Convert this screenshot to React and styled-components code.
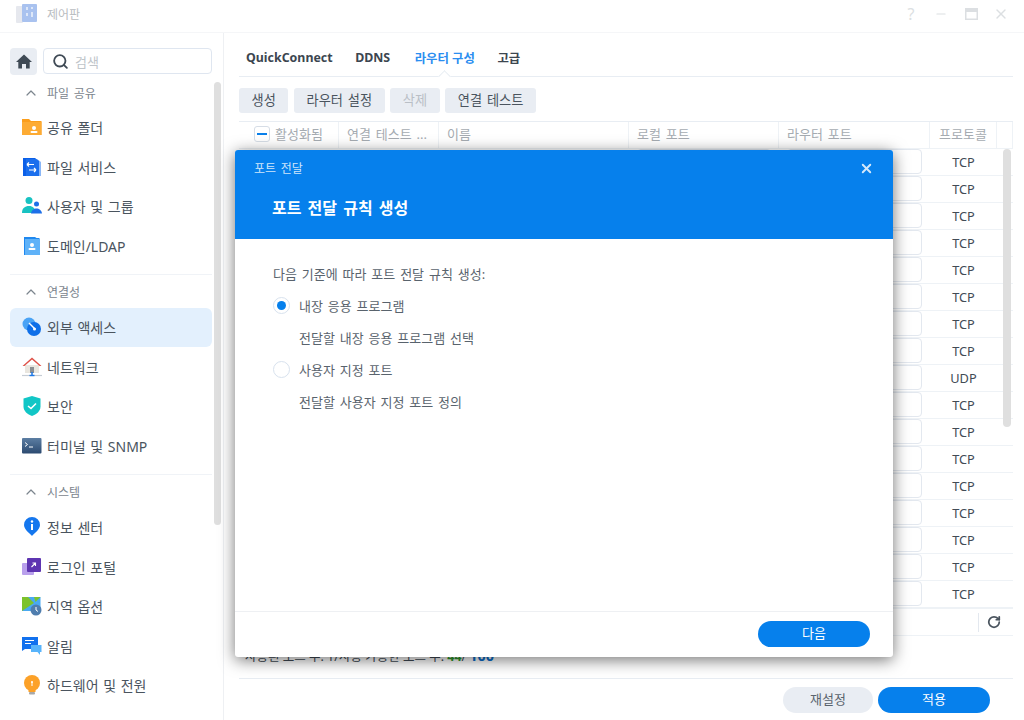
import React from "react";
import styled, { createGlobalStyle } from "styled-components";
import { ChevronUp, RotateCw, Search, X, Minus } from "lucide-react";

const Global = createGlobalStyle`
  html, body { margin: 0; padding: 0; height: 100%; overflow: hidden; background: #fff; }
  * { box-sizing: border-box; }
  body { font-family: "Noto Sans", "Noto Sans CJK KR", sans-serif; color: #414b55; word-spacing: 1.5px; }
`;

const Page = styled.div`
  position: relative;
  width: 1024px;
  height: 720px;
  overflow: hidden;
  display: flex;
  flex-direction: column;
  background: #fff;
`;
const TitleBar = styled.header`
  height: 33px;
  flex: none;
  display: flex;
  align-items: center;
  padding: 0 16px 5px;
  border-bottom: 1px solid #f5f6f8;
`;
const AppTitle = styled.span`
  margin-left: 9px;
  font-size: 12px;
  color: #b9bdc1;
  flex: 1;
`;
const WindowControls = styled.div`
  display: flex;
  align-items: center;
  gap: 14px;
  margin-right: -1px;
  color: #dcdfe2;
`;
const WindowButton = styled.span`
  width: 16px;
  height: 16px;
  display: flex;
  align-items: center;
  justify-content: center;
  font-size: 16px;
`;
const Body = styled.div`
  flex: 1;
  min-height: 0;
  display: flex;
`;
const Sidebar = styled.aside`
  position: relative;
  width: 224px;
  flex: none;
  border-right: 1px solid #eef0f3;
  padding: 15px 11px 0 10px;
  overflow: hidden;
`;
const SearchRow = styled.div`
  display: flex;
  gap: 6px;
`;
const HomeButton = styled.div`
  width: 27px;
  height: 27px;
  border-radius: 4px;
  background: #e9edf3;
  display: flex;
  align-items: center;
  justify-content: center;
`;
const SearchBox = styled.div`
  flex: 1;
  height: 26px;
  border: 1px solid #dfe6f0;
  border-radius: 4px;
  display: flex;
  align-items: center;
  gap: 6px;
  padding-left: 8px;
  font-size: 13px;
  color: #c0c5ca;
`;
const SectionHeader = styled.div`
  height: 33px;
  display: flex;
  align-items: center;
  gap: 8px;
  padding: 2px 0 0 13px;
  font-size: 12px;
  color: #7c858e;
`;
const NavItem = styled.div`
  height: 39.6px;
  display: flex;
  align-items: center;
  gap: 4px;
  padding: 0 0 1px 11px;
  border-radius: 6px;
  font-size: 14px;
  word-spacing: 1px;
  color: #4a545e;
  background: ${p => (p.$active ? "#e3f0fd" : "transparent")};
`;
const Divider = styled.div`
  height: 1px;
  margin-top: 7.5px;
  background: #f0f3f7;
`;
const SideScroll = styled.div`
  position: absolute;
  left: 214px;
  top: 49px;
  width: 7px;
  height: 443px;
  border-radius: 4px;
  background: #dfdfdf;
`;
const Main = styled.main`
  flex: 1;
  min-width: 0;
  display: flex;
  flex-direction: column;
  padding: 0 11px 0 15px;
`;
const Tabs = styled.nav`
  position: relative;
  height: 44px;
  flex: none;
  display: flex;
  align-items: center;
  gap: 22.5px;
  padding: 6px 0 0 7px;
  border-bottom: 1px solid #e8edf3;
`;
const Tab = styled.span`
  margin-left: ${p => (p.$active ? 2 : 0)}px;
  font-size: 12.4px;
  font-weight: 700;
  word-spacing: 0;
  color: ${p => (p.$active ? "#2b8ef0" : "#3c4650")};
`;
const TabNotch = styled.span`
  position: absolute;
  left: 201px;
  bottom: -5px;
  width: 9px;
  height: 9px;
  background: #fff;
  border-left: 1px solid #e8edf3;
  border-top: 1px solid #e8edf3;
  transform: rotate(45deg);
`;
const Toolbar = styled.div`
  margin-top: 11px;
  display: flex;
  gap: 5.5px;
`;
const ToolButton = styled.button`
  height: 25px;
  padding: 0 12.6px 2px;
  border: 0;
  border-radius: 3px;
  background: #e9edf3;
  font: inherit;
  font-size: 13.2px;
  word-spacing: 1.5px;
  color: ${p => (p.disabled ? "#b9bfc6" : "#4a545e")};
`;
const Table = styled.div`
  margin-top: 8px;
  flex: none;
  height: 487px;
  border-top: 1px solid #e8edf3;
  overflow: hidden;
  position: relative;
`;
const gridCols = "100px 100px 190px 150px 151px 67px 1fr";
const HeadRow = styled.div`
  display: grid;
  grid-template-columns: ${gridCols};
  height: 27px;
  border-bottom: 1px solid #eef2f6;
`;
const HeadCell = styled.div`
  display: flex;
  align-items: center;
  gap: 5px;
  padding: 0 0 3px ${p => p.$pad ?? 8}px;
  font-size: 13px;
  color: #a5abb1;
  border-right: 1px solid #eef2f6;
  white-space: nowrap;
  overflow: hidden;
`;
const CheckBox = styled.span`
  width: 16px;
  height: 16px;
  border: 1px solid #d6dde6;
  border-radius: 3px;
  display: flex;
  align-items: center;
  justify-content: center;
  flex: none;
  &::after {
    content: "";
    width: 10px;
    height: 2px;
    background: #0a80ea;
  }
`;
const Row = styled.div`
  display: grid;
  grid-template-columns: ${gridCols};
  height: 27px;
  border-bottom: 1px solid #eef2f6;
`;
const Cell = styled.div`
  display: flex;
  align-items: center;
  padding: 0 8px;
`;
const PortInput = styled.div`
  width: 100%;
  height: 25px;
  margin-top: -2px;
  border: 1px solid #e3e8ef;
  border-radius: 4px;
  background: #fff;
`;
const Proto = styled.div`
  display: flex;
  align-items: center;
  justify-content: center;
  padding-bottom: 1px;
  font-size: 12.8px;
  color: #414b55;
`;
const TableScroll = styled.div`
  position: absolute;
  left: 764px;
  top: 27px;
  width: 8px;
  height: 278px;
  border-radius: 4px;
  background: #dfdfdf;
`;
const Pager = styled.div`
  height: 28px;
  flex: none;
  border-top: 1px solid #eef2f6;
  border-bottom: 1px solid #eef2f6;
  display: flex;
  justify-content: flex-end;
  align-items: center;
  padding-right: 12px;
`;
const PagerSep = styled.span`
  width: 1px;
  height: 19px;
  background: #e3e8ef;
  margin-right: 8px;
`;
const Status = styled.div`
  height: 43px;
  flex: none;
  padding: 9px 0 0 6px;
  font-size: 12.5px;
  line-height: 20px;
  word-spacing: 0;
  color: #414b55;
  border-bottom: 1px solid #e8edf3;
`;
const Green = styled.b`
  color: #2f9e2f;
`;
const Blue = styled.b`
  margin-left: 3px;
  font-size: 14.5px;
  color: #0a6fd0;
`;
const Footer = styled.footer`
  flex: 1;
  display: flex;
  justify-content: flex-end;
  gap: 5px;
  padding: 8px 23px 0 0;
`;
const Pill = styled.button`
  width: ${p => p.$w}px;
  height: 26px;
  padding: 0 0 4px;
  border: 0;
  border-radius: 13px;
  font: inherit;
  font-size: 13px;
  color: ${p => (p.$primary ? "#fff" : "#59636d")};
  background: ${p => (p.$primary ? "#0680ec" : "#e9edf3")};
`;
const Modal = styled.section`
  position: absolute;
  left: 235px;
  top: 150px;
  width: 658px;
  height: 507px;
  background: #fff;
  border-radius: 3px;
  box-shadow: 0 3px 16px rgba(0, 0, 0, 0.55);
  display: flex;
  flex-direction: column;
  overflow: hidden;
`;
const ModalHeader = styled.div`
  height: 89px;
  flex: none;
  background: #0680ec;
  color: #fff;
  padding: 9px 19px 0;
`;
const ModalTop = styled.div`
  display: flex;
  align-items: center;
  justify-content: space-between;
  height: 18px;
  font-size: 12px;
  color: #cfe6fb;
`;
const ModalTitle = styled.h2`
  margin: 21px 0 0 18px;
  font-size: 16px;
  line-height: 20px;
  font-weight: 700;
  word-spacing: 2px;
  color: #fff;
`;
const ModalBody = styled.div`
  flex: 1;
  padding: 25px 38px 0;
  font-size: 13px;
  color: #59636d;
`;
const Lead = styled.p`
  margin: 0;
  height: 20px;
  line-height: 20px;
`;
const RadioRow = styled.label`
  display: flex;
  align-items: center;
  gap: 9px;
  height: 20px;
  padding-bottom: 2px;
  margin-top: ${p => p.$mt}px;
`;
const Radio = styled.span`
  width: 17px;
  height: 17px;
  flex: none;
  border-radius: 50%;
  border: 1px solid #d8e2ee;
  display: flex;
  align-items: center;
  justify-content: center;
  &::after {
    content: "";
    width: 9px;
    height: 9px;
    border-radius: 50%;
    background: ${p => (p.$on ? "#0680ec" : "transparent")};
  }
`;
const RadioHint = styled.div`
  margin: 12px 0 0 26px;
  height: 20px;
  line-height: 20px;
`;
const ModalFooter = styled.div`
  height: 46px;
  flex: none;
  border-top: 1px solid #eef0f3;
  display: flex;
  justify-content: flex-end;
  padding: 9px 23px 0 0;
`;

const Ico = ({ children }) => (
  <svg width="22" height="22" viewBox="0 0 22 22" style={{ flex: "none" }}>{children}</svg>
);

const icons = {
  folder: (
    <Ico>
      <path d="M1 3h7l2 2h10.500v14h-19.500z" fill="#fb9e1c" />
      <path d="M1 6h19.500v13h-19.500z" fill="#fdab33" />
      <circle cx="13" cy="12" r="2" fill="#fff" />
      <rect x="9.500" y="15" width="7" height="2" rx="1" fill="#fff" />
    </Ico>
  ),
  files: (
    <Ico>
      <path d="M2 2h12l4 3v15h-16z" fill="#0b5fe8" />
      <path d="M5 3h11l4 3v14h-15z" fill="#2a7bf0" opacity=".55" />
      <path d="M6 8.500h7M6 8.500l2-2M6 8.500l2 2M15 14h-7M15 14l-2-2M15 14l-2 2" stroke="#fff" strokeWidth="1.200" fill="none" />
    </Ico>
  ),
  users: (
    <Ico>
      <circle cx="8" cy="5.500" r="3.500" fill="#18c2c2" />
      <path d="M1 18c0-5 3-7 7-7s6 2 7 7z" fill="#18c2c2" />
      <circle cx="15.500" cy="9" r="2.500" fill="#1d6fe8" />
      <path d="M10 18.500c.5-3.500 3-5 5.500-5s5 1.500 5.500 5z" fill="#1d6fe8" />
    </Ico>
  ),
  domain: (
    <Ico>
      <path d="M3 2h11l1.500 1h3v17h-15.500z" fill="#1f88ef" />
      <rect x="4" y="4" width="15" height="16" fill="#5fb2f8" />
      <circle cx="11" cy="10" r="2" fill="#fff" />
      <rect x="7.500" y="13" width="7" height="2" rx="1" fill="#fff" />
    </Ico>
  ),
  external: (
    <Ico>
      <circle cx="8" cy="8" r="6.500" fill="#4aa3f5" />
      <circle cx="13" cy="13" r="7" fill="#0f6fe8" />
      <path d="M8 7l6 6" stroke="#fff" strokeWidth="1.400" />
      <circle cx="13.500" cy="13" r="1.500" fill="#fff" />
    </Ico>
  ),
  network: (
    <Ico>
      <path d="M4 9h14v8h-14z" fill="#e9e6df" />
      <path d="M11 1.500l9.500 8.500h-2l-7.500-6.500-7.500 6.500h-2z" fill="#df5148" />
      <path d="M9 11h4v6h-4z" fill="#8b8f93" />
      <path d="M1 19.500h20" stroke="#c5ccd4" strokeWidth="1.200" />
      <path d="M11 16v3" stroke="#1d78e6" strokeWidth="1.500" />
      <path d="M8.500 19.500h5" stroke="#1d78e6" strokeWidth="1.400" />
    </Ico>
  ),
  shield: (
    <Ico>
      <path d="M11 1l8.500 2.500v8c0 4.500-4 8-8.500 9.500-4.500-1.500-8.500-5-8.500-9.500v-8z" fill="#11c6c6" />
      <path d="M7 11l3 2.500 5-5" stroke="#fff" strokeWidth="1.600" fill="none" />
    </Ico>
  ),
  terminal: (
    <Ico>
      <defs>
        <linearGradient id="term" x1="0" y1="0" x2="0" y2="1">
          <stop offset="0" stopColor="#5c7ea3" />
          <stop offset="1" stopColor="#2c4a70" />
        </linearGradient>
      </defs>
      <rect x="1" y="3" width="19.500" height="15.500" rx="1" fill="url(#term)" />
      <path d="M4 7.500l2.500 2-2.500 2" stroke="#fff" strokeWidth="1" fill="none" />
      <path d="M8 12h4" stroke="#fff" strokeWidth="1" />
    </Ico>
  ),
  info: (
    <Ico>
      <path d="M11 20c-1-2-8-6-8-11a8 8 0 0 1 16 0c0 5-7 9-8 11z" fill="#1577ee" />
      <circle cx="11" cy="5.500" r="1.200" fill="#fff" />
      <rect x="10" y="8" width="2" height="6" fill="#fff" />
    </Ico>
  ),
  portal: (
    <Ico>
      <rect x="1" y="7" width="12" height="12" rx="1" fill="#b9a0ec" />
      <rect x="6" y="2" width="14" height="14" rx="1" fill="#5e35b1" />
      <path d="M10.500 11l4-4M11.500 7h3v3" stroke="#fff" strokeWidth="1.100" fill="none" />
    </Ico>
  ),
  region: (
    <Ico>
      <path d="M1 2h18.500v14h-18.500z" fill="#49a9f2" />
      <path d="M1 2h6l6 6-12 8z" fill="#7cc22c" />
      <path d="M13 2h6.500l-5 5z" fill="#7cc22c" />
      <circle cx="15" cy="15" r="5.500" fill="#4f7dae" />
      <path d="M15 12v3l2 1.500" stroke="#fff" strokeWidth="1" fill="none" />
    </Ico>
  ),
  notice: (
    <Ico>
      <path d="M1 2h16v12h-13l-3 2z" fill="#1271ee" />
      <path d="M4 5.500h9M4 8.500h6" stroke="#fff" strokeWidth="1.200" />
      <path d="M10 10h10.500v7h-1.500v3l-2.500-3h-6.500z" fill="#58b4fb" />
    </Ico>
  ),
  bulb: (
    <Ico>
      <circle cx="11" cy="9" r="8" fill="#fca128" />
      <rect x="7.500" y="15" width="7" height="3" fill="#fca128" />
      <rect x="8" y="18" width="6" height="2.500" rx="1" fill="#a8a8a8" />
      <circle cx="11" cy="8" r="1" fill="#fff" />
      <rect x="10.500" y="8" width="1" height="4" fill="#fff" />
    </Ico>
  ),
};

const AppLogo = () => (
  <svg width="22" height="20" viewBox="0 0 22 20">
    <rect x="0" y="2" width="7" height="17" rx="1" fill="#e6e8ee" />
    <rect x="6" y="0" width="15" height="18" rx="1" fill="#a9c2ef" />
    <path d="M11 3v3M11 9v3M16 3v2M16 8v5" stroke="#eef3fc" strokeWidth="1.500" />
  </svg>
);

const sections = [
  { head: "파일 공유", items: [["folder", "공유 폴더"], ["files", "파일 서비스"], ["users", "사용자 및 그룹"], ["domain", "도메인/LDAP"]] },
  { head: "연결성", items: [["external", "외부 액세스", true], ["network", "네트워크"], ["shield", "보안"], ["terminal", "터미널 및 SNMP"]] },
  { head: "시스템", items: [["info", "정보 센터"], ["portal", "로그인 포털"], ["region", "지역 옵션"], ["notice", "알림"], ["bulb", "하드웨어 및 전원"]] },
];

const protocols = ["TCP","TCP","TCP","TCP","TCP","TCP","TCP","TCP","UDP","TCP","TCP","TCP","TCP","TCP","TCP","TCP","TCP"];

export default function App() {
  return (
    <Page>
      <Global />
      <TitleBar>
        <AppLogo />
        <AppTitle>제어판</AppTitle>
        <WindowControls>
          <WindowButton>?</WindowButton>
          <WindowButton><Minus size={14} strokeWidth={2} /></WindowButton>
          <WindowButton>
            <svg width="13" height="12" viewBox="0 0 13 12"><rect x=".75" y=".75" width="11.500" height="10.500" fill="none" stroke="currentColor" strokeWidth="1.500" /><rect x="1" y="1" width="11" height="3" fill="currentColor" /></svg>
          </WindowButton>
          <WindowButton><X size={16} strokeWidth={2} /></WindowButton>
        </WindowControls>
      </TitleBar>
      <Body>
        <Sidebar>
          <SearchRow>
            <HomeButton>
              <svg width="16" height="15" viewBox="0 0 16 15"><path d="M8 .5L16 8h-2.300v6.500h-3.700v-4.500h-4v4.500h-3.700v-6.500h-2.300z" fill="#3f4a55" /></svg>
            </HomeButton>
            <SearchBox><Search size={17} strokeWidth={2.600} color="#3f4a55" />검색</SearchBox>
          </SearchRow>
          {sections.map((s, i) => (
            <React.Fragment key={s.head}>
              {i > 0 && <Divider />}
              <SectionHeader><ChevronUp size={16} strokeWidth={1.800} color="#7c858e" />{s.head}</SectionHeader>
              {s.items.map(([icon, label, active]) => (
                <NavItem key={label} $active={active}>{icons[icon]}{label}</NavItem>
              ))}
            </React.Fragment>
          ))}
          <SideScroll />
        </Sidebar>
        <Main>
          <Tabs>
            <Tab>QuickConnect</Tab>
            <Tab>DDNS</Tab>
            <Tab $active>라우터 구성</Tab>
            <Tab>고급</Tab>
            <TabNotch />
          </Tabs>
          <Toolbar>
            <ToolButton>생성</ToolButton>
            <ToolButton>라우터 설정</ToolButton>
            <ToolButton disabled>삭제</ToolButton>
            <ToolButton>연결 테스트</ToolButton>
          </Toolbar>
          <Table>
            <HeadRow>
              <HeadCell $pad={15}><CheckBox />활성화됨</HeadCell>
              <HeadCell>연결 테스트 ...</HeadCell>
              <HeadCell>이름</HeadCell>
              <HeadCell>로컬 포트</HeadCell>
              <HeadCell>라우터 포트</HeadCell>
              <HeadCell $pad={9}>프로토콜</HeadCell>
              <HeadCell />
            </HeadRow>
            {protocols.map((p, i) => (
              <Row key={i}>
                <Cell />
                <Cell />
                <Cell />
                <Cell><PortInput /></Cell>
                <Cell><PortInput /></Cell>
                <Proto>{p}</Proto>
              </Row>
            ))}
            <TableScroll />
          </Table>
          <Pager>
            <PagerSep />
            <RotateCw size={14} strokeWidth={3} color="#4a545e" />
          </Pager>
          <Status>사용된 포트 수: 1/사용 가능한 포트 수: <Green>44</Green>/<Blue>100</Blue></Status>
          <Footer>
            <Pill $w={90}>재설정</Pill>
            <Pill $w={112} $primary>적용</Pill>
          </Footer>
        </Main>
      </Body>
      <Modal>
        <ModalHeader>
          <ModalTop>
            포트 전달
            <X size={15} strokeWidth={3} color="#d4e8fb" />
          </ModalTop>
          <ModalTitle>포트 전달 규칙 생성</ModalTitle>
        </ModalHeader>
        <ModalBody>
          <Lead>다음 기준에 따라 포트 전달 규칙 생성:</Lead>
          <RadioRow $mt={12}><Radio $on />내장 응용 프로그램</RadioRow>
          <RadioHint>전달할 내장 응용 프로그램 선택</RadioHint>
          <RadioRow $mt={12}><Radio />사용자 지정 포트</RadioRow>
          <RadioHint>전달할 사용자 지정 포트 정의</RadioHint>
        </ModalBody>
        <ModalFooter>
          <Pill $w={112} $primary>다음</Pill>
        </ModalFooter>
      </Modal>
    </Page>
  );
}
